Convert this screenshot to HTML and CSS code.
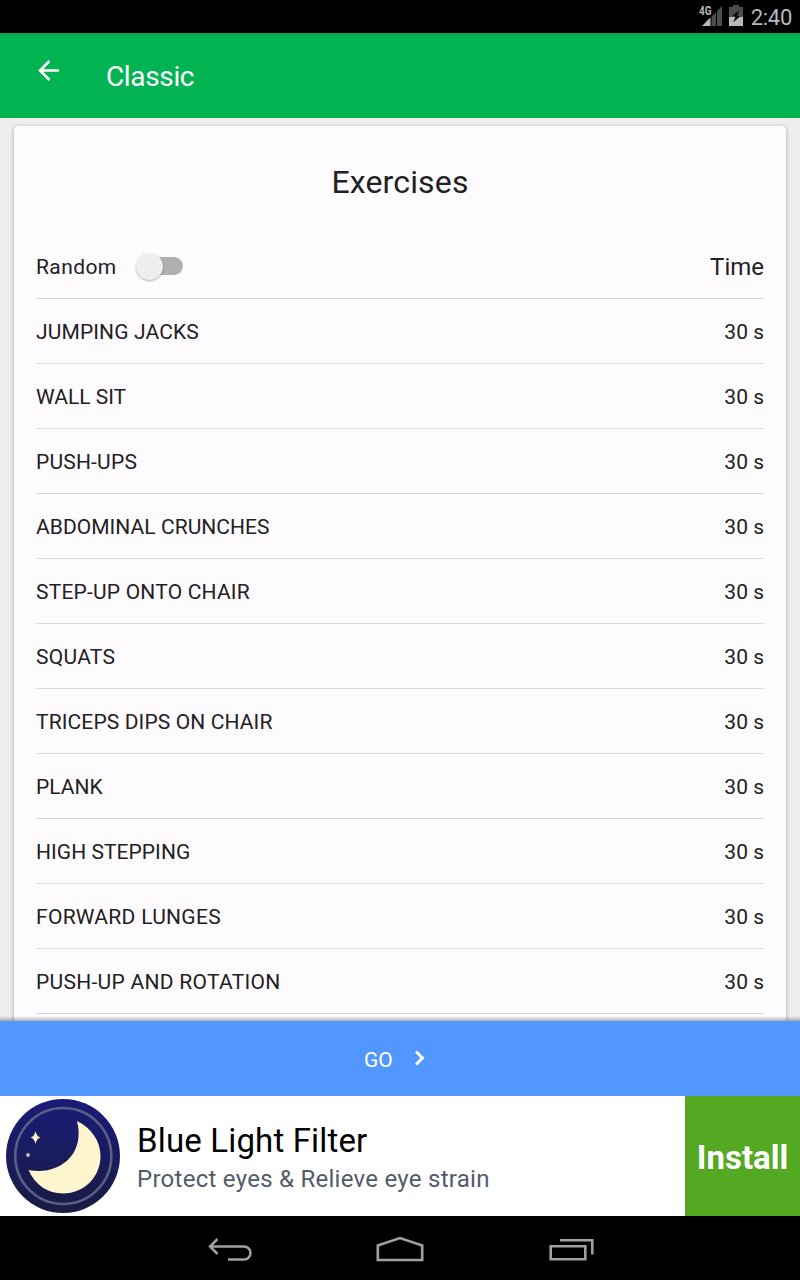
FILE: index.html
```html
<!DOCTYPE html>
<html lang="en">
<head>
<meta charset="utf-8">
<title>Classic</title>
<link rel="stylesheet" href="styles.css">
</head>
<body>
<div class="screen">
  <div class="status">
    <svg class="signal" width="26" height="28" viewBox="-2 -4 26 28">
      <path d="M3 21 L10 14 V21Z" fill="#b8b8b8"/>
      <path d="M7 17 L11.500 12.500 V21 H7Z" fill="#b8b8b8"/>
      <path d="M12.500 11.500 L17 7 V21 H12.500Z M18 6 L23 1 V21 H18Z" fill="#4b4d4b"/>
      <text class="signal-label" x="0" y="10.300" textLength="12.500" lengthAdjust="spacingAndGlyphs">4G</text>
    </svg>
    <svg class="battery" width="14" height="21" viewBox="0 0 14 21">
      <path d="M4 0H10V2H14V12H0V2H4Z" fill="#4b4d4b"/>
      <path d="M0 12H14V21H0Z" fill="#b8b8b8"/>
      <path d="M10.500 5 L3.500 10.500 L6.500 12 L4 17.500 L11 11.500 L8 10.300Z" fill="#0c0c0c"/>
    </svg>
    <span class="clock">2:40</span>
  </div>
  <header class="appbar">
    <svg class="back" width="24" height="24" viewBox="0 0 24 24"><path d="M23 11.500H4.500 M13.500 2 L4 11.500 L13.500 21" fill="none" stroke="#fff" stroke-width="2.500"/></svg>
    <h1 class="title">Classic</h1>
  </header>
  <main class="content">
    <section class="card">
      <h2 class="heading">Exercises</h2>
      <div class="row">
        <span class="random">Random</span>
        <span class="switch"><span class="thumb"></span></span>
        <span class="time-head">Time</span>
      </div>
      <div class="row"><span class="track-sm">JUMPING JACKS</span><span class="time">30 s</span></div>
      <div class="row"><span>WALL SIT</span><span class="time">30 s</span></div>
      <div class="row"><span class="track-md">PUSH-UPS</span><span class="time">30 s</span></div>
      <div class="row"><span class="track-xs">ABDOMINAL CRUNCHES</span><span class="time">30 s</span></div>
      <div class="row"><span class="track-md">STEP-UP ONTO CHAIR</span><span class="time">30 s</span></div>
      <div class="row"><span class="track-lg">SQUATS</span><span class="time">30 s</span></div>
      <div class="row"><span class="track-sm">TRICEPS DIPS ON CHAIR</span><span class="time">30 s</span></div>
      <div class="row"><span>PLANK</span><span class="time">30 s</span></div>
      <div class="row"><span class="track-xs">HIGH STEPPING</span><span class="time">30 s</span></div>
      <div class="row"><span class="track-lg">FORWARD LUNGES</span><span class="time">30 s</span></div>
      <div class="row"><span class="track-lg">PUSH-UP AND ROTATION</span><span class="time">30 s</span></div>
      <div class="row-end"></div>
    </section>
    <div class="scroll-shadow"></div>
  </main>
  <div class="go"><span>GO</span>
    <svg class="chevron" width="12" height="16" viewBox="0 0 12 16"><path d="M2 1.500 L8.500 8 L2 14.500" fill="none" stroke="#fff" stroke-width="3"/></svg>
  </div>
  <div class="ad">
    <svg class="moon" width="114" height="114" viewBox="0 0 114 114">
      <defs><linearGradient id="night" x1="0" y1="0" x2="0" y2="1"><stop offset="0" stop-color="#191c78"/><stop offset="1" stop-color="#191c42"/></linearGradient></defs>
      <circle cx="57" cy="57" r="57" fill="url(#night)"/>
      <circle cx="57.300" cy="57" r="48" fill="none" stroke="#5c5e86" stroke-width="2.600"/>
      <path d="M71 22 C86 29 94.500 43 94.500 57 C94.500 78 78 94.500 57 94.500 C42 94.500 29 86 22.500 71 C51 77 80 57 71 22Z" fill="#fff6d0"/>
      <path d="M29.500 32 Q30.500 37.500 34.500 38.500 Q30.500 39.500 29.500 45 Q28.500 39.500 24.500 38.500 Q28.500 37.500 29.500 32Z" fill="#fff6d0"/>
      <circle cx="22" cy="56" r="1.900" fill="#c9c4b8"/>
    </svg>
    <div class="ad-copy">
      <div class="ad-title">Blue Light Filter</div>
      <div class="ad-text">Protect eyes &amp; Relieve eye strain</div>
    </div>
    <div class="install">Install</div>
  </div>
  <nav class="navbar">
    <svg class="nav-back" width="46" height="26" viewBox="0 0 46 26"><path d="M3 9.500 H37 A6.500 6.500 0 0 1 37 22.500 H21 M10.500 2 L3 9.500 L10.500 17" fill="none" stroke="#a0a0a0" stroke-width="2.500"/></svg>
    <svg class="nav-home" width="50" height="28" viewBox="0 0 50 28"><path d="M2.800 25 V10.500 L25 3 L47.200 10.500 V25Z" fill="none" stroke="#a0a0a0" stroke-width="2.600"/></svg>
    <svg class="nav-recent" width="46" height="24" viewBox="0 0 46 24"><path d="M1.700 9.200 H36.300 V22.200 H1.700Z M11 3.200 H43.300 V17.500" fill="none" stroke="#a0a0a0" stroke-width="2.600"/></svg>
  </nav>
</div>
</body>
</html>
```
FILE: styles.css
```css
* { box-sizing: border-box; }
body { margin: 0; font-family: Roboto, sans-serif; color: #212121; }
.screen { width: 800px; height: 1280px; display: flex; flex-direction: column; overflow: hidden; background: #000; }
.status { height: 33px; display: flex; justify-content: flex-end; align-items: flex-start; background: #000; padding-right: 8px; }
.signal { margin-top: 1px; margin-right: 6px; flex: none; }
.signal-label { font-size: 13px; font-weight: 700; fill: #b8b8b8; stroke: #000; stroke-width: 1.2px; paint-order: stroke; }
.battery { margin-top: 5px; margin-right: 8px; flex: none; }
.clock { font-size: 22px; line-height: 26px; margin-top: 5px; letter-spacing: -.3px; color: #b8b8b8; }
.appbar { height: 85px; display: flex; align-items: flex-start; padding-left: 36px; background: linear-gradient(#03a04b, #00b251 4px, #02b352 10px); }
.back { margin-top: 26px; }
.title { margin: 27px 0 0 46px; font-size: 28px; line-height: 33px; font-weight: 400; letter-spacing: -.35px; color: #fff; }
.content { height: 903px; position: relative; overflow: hidden; padding: 8px 14px 0; background: #eee; }
.card { height: 960px; padding: 0 22px; border-radius: 4px; background: #fefbff; box-shadow: 0 1px 4px rgba(0, 0, 0, .32); }
.heading { margin: 0; padding-top: 36px; height: 107px; text-align: center; font-size: 32px; line-height: 40px; font-weight: 400; letter-spacing: .15px; }
.row { height: 65px; display: flex; align-items: center; border-bottom: 1px solid #dcd9dd; font-size: 21px; line-height: 26px; padding-top: 2px; }
.row:nth-of-type(1) { height: 66px; }
.random { letter-spacing: .4px; }
.track-xs { letter-spacing: .05px; }
.track-sm { letter-spacing: .12px; }
.track-md { letter-spacing: .2px; }
.track-lg { letter-spacing: .29px; }
.time { margin-left: auto; }
.time-head { margin-left: auto; font-size: 24px; }
.switch { width: 44px; height: 18px; margin: -1px 0 0 22px; display: flex; align-items: center; border-radius: 9px; background: #afafaf; }
.thumb { width: 27px; height: 27px; margin-left: -3px; border-radius: 50%; background: #eee; box-shadow: 0 1px 2px rgba(0, 0, 0, .3); }
.scroll-shadow { position: absolute; left: 0; right: 0; bottom: 0; height: 5px; background: linear-gradient(rgba(0, 0, 0, 0), rgba(0, 0, 0, .3)); }
.go { height: 75px; display: flex; align-items: center; padding: 2px 0 0 364px; font-size: 21px; background: #5296ff; color: #fff; }
.chevron { margin: -4px 0 0 21px; }
.ad { height: 120px; display: flex; background: #fff; }
.moon { margin: 3px 0 0 6px; flex: none; }
.ad-copy { margin-left: 17px; padding-top: 24px; flex: 1; white-space: nowrap; }
.ad-title { font-size: 33px; line-height: 42px; letter-spacing: .16px; color: #000; }
.ad-text { font-size: 24px; line-height: 34px; letter-spacing: .27px; color: #525b6b; }
.install { width: 115px; display: flex; align-items: center; justify-content: center; padding-top: 3px; font-size: 33px; font-weight: 700; color: #fff; background: #53a922; }
.navbar { height: 64px; display: flex; background: #000; }
.nav-back { margin: 21px 0 0 207px; }
.nav-home { margin: 19px 0 0 122px; }
.nav-recent { margin: 21px 0 0 124px; }
```
